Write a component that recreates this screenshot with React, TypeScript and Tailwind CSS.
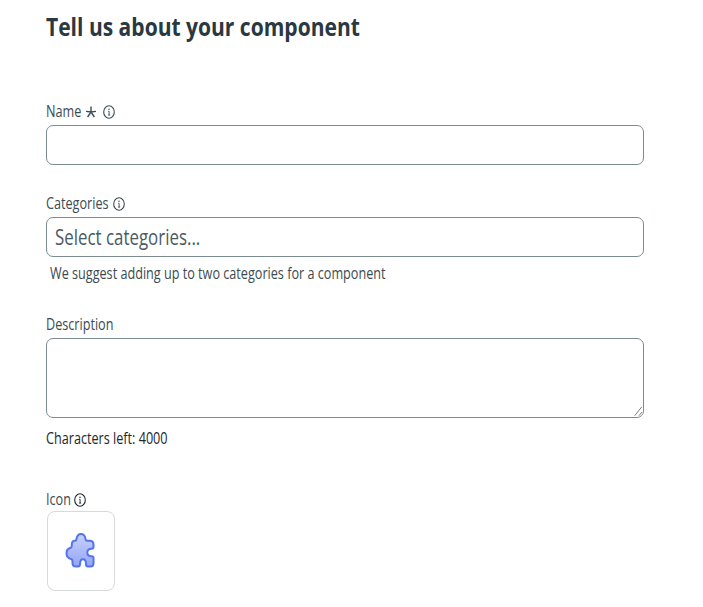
import type { ReactNode } from "react";

function InfoIcon({ className = "" }: { className?: string }) {
  return (
    <svg viewBox="0 0 12 14" preserveAspectRatio="none" className={`h-[14px] w-3 shrink-0 ${className}`} fill="none">
      <ellipse cx="6" cy="7" rx="5.3" ry="6.2" stroke="currentColor" strokeWidth="1.1" />
      <ellipse cx="6" cy="4.2" rx="0.75" ry="0.8" fill="currentColor" />
      <path d="M5.2 6.3h.9v3.9M5 10.1h2.1" stroke="currentColor" strokeWidth="0.9" />
    </svg>
  );
}

function RequiredIcon() {
  return (
    <svg viewBox="0 0 10 12" className="ml-1 mt-[5px] h-3 w-[10px] shrink-0" fill="none" stroke="currentColor" strokeWidth="1.4">
      <path d="M5 .5V6M0 5.4L5 6L10 5.4M1.6 11L5 6L8.4 11" />
    </svg>
  );
}

function PuzzleIcon() {
  return (
    <svg viewBox="0 0 30 36" className="mr-[3px] mb-[2px] h-9 w-[30px]">
      <defs>
        <linearGradient id="piece" x1="0" y1="0" x2="0" y2="1">
          <stop offset="0" stopColor="#c8d0fa" />
          <stop offset="1" stopColor="#93a6f5" />
        </linearGradient>
      </defs>
      <path
        d="M6.8 13.5V12.5Q6.8 8.8 10 8.8Q11.2 8.8 11.5 7C12 3.8 13.5 2 16 2S20 3.8 20.5 7Q20.8 8.8 22 8.8H24.8Q28.5 8.8 28.5 12.5V14.5Q28.5 16.8 26.5 16.8C23.8 16.8 22.3 18 22.3 20.5S23.8 24.2 26.5 24.2Q28.5 24.2 28.5 26V31Q28.5 34.5 25.5 34.5H23Q21 34.5 21 32C21 29 20 27.3 18 27.3S15 29 15 32Q15 34.5 13 34.5H11Q7.5 34.5 7.5 31V29Q7.5 27.5 6 27C3.2 26.2 1.5 24 1.5 21.2S3.2 16.5 5.5 15.8Q6.8 15.3 6.8 13.5Z"
        fill="url(#piece)"
        stroke="#5474ec"
        strokeWidth="2"
        strokeLinejoin="round"
      />
    </svg>
  );
}

function Label({ children, width }: { children: ReactNode; width: string }) {
  return (
    <span className={`block shrink-0 ${width}`}>
      <span className="inline-block origin-left scale-x-[0.815] whitespace-nowrap">{children}</span>
    </span>
  );
}

export default function App() {
  return (
    <main className="h-[607px] overflow-hidden bg-white pl-[46px] pt-[9px] font-['Open_Sans',sans-serif] text-[15.5px] leading-5 text-[#3c4b52]">
      <h1 className="h-[92px] text-[25px] leading-[34px] font-bold text-[#2a383f]">
        <span className="inline-block origin-left scale-x-[0.841] whitespace-nowrap">Tell us about your component</span>
      </h1>

      <div className="flex h-6 items-start">
        <Label width="w-[36px]">Name</Label>
        <RequiredIcon />
        <InfoIcon className="ml-[7px] mt-1" />
      </div>
      <div className="h-10 w-[598px] rounded-[7px] border border-[#7c8b90]" />

      <div className="mt-[28px] flex h-6 items-start">
        <Label width="w-[63px]">Categories</Label>
        <InfoIcon className="ml-1 mt-1" />
      </div>
      <div className="flex h-10 w-[598px] items-center rounded-[7px] border border-[#7c8b90] pl-[8px] text-[21px] leading-[30px]">
        <span className="origin-left scale-x-[0.804] whitespace-nowrap text-[#4a5a61]">Select categories...</span>
      </div>
      <div className="mt-[6px] pl-1">
        <Label width="w-[336px]">We suggest adding up to two categories for a component</Label>
      </div>

      <div className="mt-[31px] h-6">
        <Label width="w-[67px]">Description</Label>
      </div>
      <div className="flex h-20 w-[598px] items-end justify-end rounded-[7px] border border-[#7c8b90]">
        <svg viewBox="0 0 9 11" className="h-[11px] w-[9px]" fill="none" stroke="#777d82" strokeWidth="1">
          <path d="M.7 9.7L7.7 1M5 9.7L8 6" />
        </svg>
      </div>
      <div className="mt-[10px] text-[#20282c]">
        <Label width="w-[122px]">Characters left: 4000</Label>
      </div>

      <div className="mt-[41px] flex h-[22px] items-start">
        <Label width="w-[25px]">Icon</Label>
        <InfoIcon className="ml-[3px] mt-1 text-[#20282c]" />
      </div>
      <div className="ml-[1px] flex h-20 w-[68px] items-center justify-center rounded-[8px] border border-[#d6dada]">
        <PuzzleIcon />
      </div>
    </main>
  );
}
